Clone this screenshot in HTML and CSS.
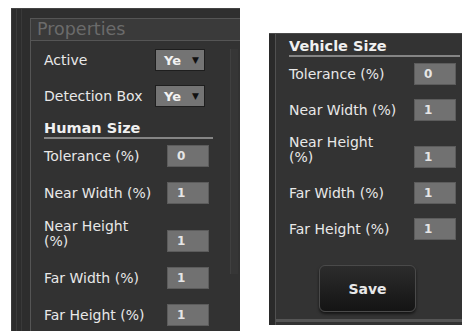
FILE: index.html
```html
<!DOCTYPE html>
<html lang="en">
<head>
  <meta charset="UTF-8">
  <title>Properties</title>
  <link rel="stylesheet" href="styles.css">
</head>
<body>

  <div class="painel">
    <div class="faixa"></div>
    <div class="principal">
      <div class="titulo">Properties</div>
      <div class="corpo">
        <div class="conteudo">
          <div class="linha">
            <span class="rotulo">Active</span>
            <div class="seletor"><span class="valor">Ye</span><span class="seta">&#9660;</span></div>
          </div>
          <div class="linha">
            <span class="rotulo">Detection Box</span>
            <div class="seletor"><span class="valor">Ye</span><span class="seta">&#9660;</span></div>
          </div>

          <h3 class="secao">Human Size</h3>
          <div class="campo">
            <span class="rotulo">Tolerance (%)</span>
            <div class="caixa">0</div>
          </div>
          <div class="campo">
            <span class="rotulo">Near Width (%)</span>
            <div class="caixa">1</div>
          </div>
          <div class="campo duplo">
            <span class="rotulo">Near Height (%)</span>
            <div class="caixa">1</div>
          </div>
          <div class="campo">
            <span class="rotulo">Far Width (%)</span>
            <div class="caixa">1</div>
          </div>
          <div class="campo">
            <span class="rotulo">Far Height (%)</span>
            <div class="caixa">1</div>
          </div>
        </div>
        <div class="rolagem"><div class="polegar"></div></div>
      </div>
    </div>
  </div>

  <div class="painel-dir">
    <div class="faixa-dir"></div>
    <div class="principal-dir">
      <h3 class="secao">Vehicle Size</h3>
      <div class="campo">
        <span class="rotulo">Tolerance (%)</span>
        <div class="caixa">0</div>
      </div>
      <div class="campo">
        <span class="rotulo">Near Width (%)</span>
        <div class="caixa">1</div>
      </div>
      <div class="campo duplo">
        <span class="rotulo">Near Height (%)</span>
        <div class="caixa">1</div>
      </div>
      <div class="campo">
        <span class="rotulo">Far Width (%)</span>
        <div class="caixa">1</div>
      </div>
      <div class="campo">
        <span class="rotulo">Far Height (%)</span>
        <div class="caixa">1</div>
      </div>
      <div class="acoes">
        <button class="salvar">Save</button>
      </div>
    </div>
  </div>

</body>
</html>
```

FILE: styles.css
```css
body {
  margin: 0;
  background-color: #ffffff;
  font-family: "DejaVu Sans", Verdana, sans-serif;
  display: flex;
  align-items: flex-start;
  padding: 8px 0 0 11px;
}

/* painel da esquerda */
.painel {
  width: 229px;
  height: 323px;
  background-color: #2f2f2f;
  display: flex;
  border-top: 1px solid #444;
  box-sizing: border-box;
}

.faixa {
  width: 18px;
  border-left: 1px solid #3a3a3a;
  background: linear-gradient(90deg, #2c2c2c 0 4px, #3a3a3a 4px 5px, #2c2c2c 5px 9px, #393939 9px 10px, #2d2d2d 10px);
}

.principal {
  flex: 1;
  margin-top: 9px;
  border-left: 1px solid #555;
  border-top: 1px solid #555;
  display: flex;
  flex-direction: column;
  background-color: #323232;
}

.titulo {
  height: 21px;
  line-height: 21px;
  padding-left: 6px;
  font-size: 17.5px;
  color: #6b6b6b;
  background-color: #3a3a3a;
  border-bottom: 1px solid #555;
}

.corpo {
  flex: 1;
  display: flex;
}

.conteudo {
  flex: 1;
  padding: 7px 0 0 13px;
}

.rolagem {
  width: 8px;
  margin-right: 2px;
  padding-top: 8px;
}

.polegar {
  height: 225px;
  background-color: #363636;
  border-left: 1px solid #404040;
}

.linha {
  display: flex;
  align-items: center;
  height: 24px;
  margin-bottom: 12px;
}

.rotulo {
  width: 123px;
  font-size: 14px;
  line-height: 15px;
  color: #e8e8e8;
}

.linha .rotulo {
  width: 111px;
}

.seletor {
  width: 50px;
  height: 22px;
  box-sizing: border-box;
  border: 1px solid #1e1e1e;
  background-color: #747474;
  display: flex;
  align-items: center;
  justify-content: space-between;
  padding: 0 5px 0 8px;
}

.valor {
  font-size: 13px;
  font-weight: bold;
  color: #f2f2f2;
}

.seta {
  font-size: 9px;
  color: #111;
}

.secao {
  margin: 0 0 6px 0;
  width: 169px;
  font-size: 14.5px;
  line-height: 17px;
  font-weight: bold;
  color: #f0f0f0;
  border-bottom: 2px solid #858585;
}

.campo {
  display: flex;
  align-items: center;
  height: 22px;
  margin-bottom: 15px;
}

.campo.duplo {
  height: 33px;
  align-items: flex-end;
}

.campo.duplo .rotulo {
  align-self: flex-start;
  width: 100px;
}

.campo.duplo .caixa {
  margin-left: 23px;
}

.caixa {
  width: 42px;
  height: 22px;
  box-sizing: border-box;
  background-color: #717171;
  border: 1px solid #5c5c5c;
  color: #e6e6e6;
  font-size: 12px;
  font-weight: bold;
  line-height: 20px;
  padding-left: 9px;
}

/* painel da direita */
.painel-dir {
  margin: 25px 0 0 29px;
  width: 193px;
  height: 292px;
  display: flex;
  background-color: #333;
  border-top: 1px solid #4a4a4a;
  box-sizing: border-box;
}

.faixa-dir {
  width: 6px;
  background-color: #2a2a2a;
  border-right: 1px solid #505050;
}

.principal-dir {
  flex: 1;
  padding: 4px 0 0 13px;
  border-bottom: 3px solid #555;
  margin-bottom: 3px;
}

.principal-dir .secao {
  width: 171px;
}

.principal-dir .campo {
  margin-bottom: 14px;
}

.principal-dir .rotulo {
  width: 125px;
}

.principal-dir .campo.duplo .caixa {
  margin-left: 25px;
}

.acoes {
  padding: 11px 0 0 30px;
}

.salvar {
  width: 97px;
  height: 47px;
  border-radius: 6px;
  border: 1px solid #4a4a4a;
  background: linear-gradient(#2c2c2c, #141414);
  box-shadow: 0 2px 3px rgba(0,0,0,0.6);
  color: #e8e8e8;
  font-family: "DejaVu Sans", Verdana, sans-serif;
  font-size: 14px;
  font-weight: bold;
  cursor: pointer;
}
```
